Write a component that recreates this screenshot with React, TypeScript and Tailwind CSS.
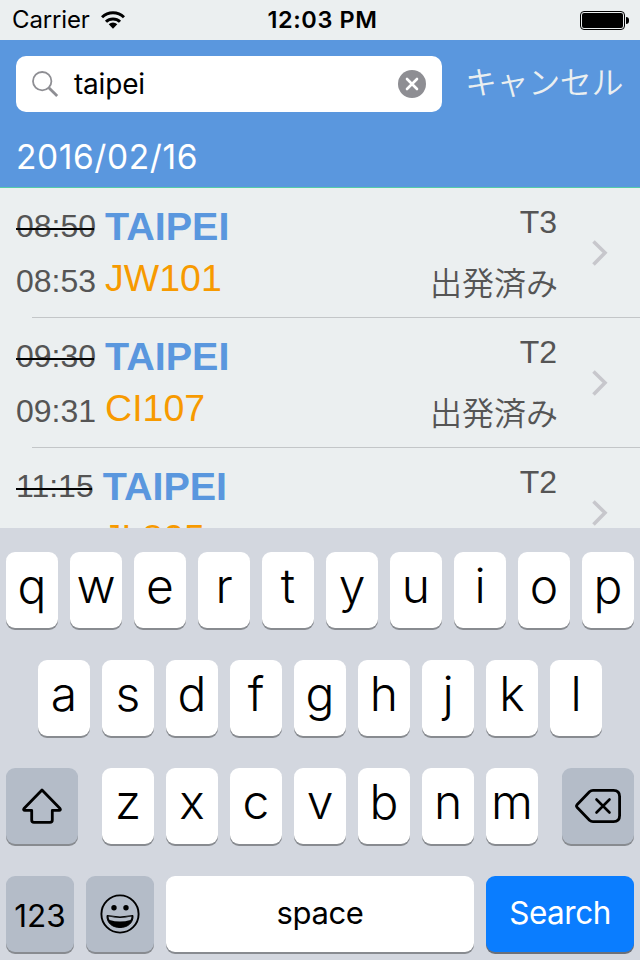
import React from "react";

type Flight = { sched: string; actual: string; code: string; gate: string };

const flights: Flight[] = [
  { sched: "08:50", actual: "08:53", code: "JW101", gate: "T3" },
  { sched: "09:30", actual: "09:31", code: "CI107", gate: "T2" },
  { sched: "11:15", actual: "11:17", code: "JL805", gate: "T2" },
];

function StatusBar() {
  return (
    <div className="flex h-10 shrink-0 items-center justify-between bg-[#ebeff0] pl-3 pr-[11px] text-black">
      <div className="flex w-[200px] items-center">
        <span className="w-[89px] text-[24px] leading-[42px] tracking-[-0.15px] whitespace-nowrap">Carrier</span>
        <svg width="24" height="18" viewBox="0 0 24 18" fill="none" stroke="#000" strokeWidth="3">
          <path d="M1 6.300a15.700 15.700 0 0 1 22 0" />
          <path d="M5 10.800a10 10 0 0 1 14 0" />
          <path d="M12 17.800l-4.300-4.500a6.200 6.200 0 0 1 8.600 0z" fill="#000" stroke="none" />
        </svg>
      </div>
      <span className="ml-[4px] text-[23.5px] leading-[42px] font-semibold tracking-[0.6px]">12:03 PM</span>
      <div className="flex w-[200px] items-center justify-end">
        <div className="h-[19px] w-[45px] rounded-[4px] border border-black p-px">
          <div className="h-full w-full rounded-[2px] bg-black" />
        </div>
        <div className="ml-px h-[7px] w-[3px] rounded-r-full bg-black" />
      </div>
    </div>
  );
}

function Header() {
  return (
    <div className="h-[148px] shrink-0 border-b border-[#55cba8] bg-[#5a97de] pt-4">
      <div className="flex h-14 pl-4">
        <div className="flex h-14 w-[426px] items-center rounded-[10px] bg-white pl-4 pr-4">
          <svg width="27" height="27" viewBox="0 0 27 27" fill="none" stroke="#8e8e93">
            <circle cx="10.2" cy="10.2" r="9.2" strokeWidth="1.8" />
            <path d="M16.8 16.8l8.4 8.2" strokeWidth="2.8" />
          </svg>
          <span className="ml-[15px] flex-1 text-[28px] leading-[54px] tracking-[-0.2px] text-black">taipei</span>
          <svg width="28" height="28" viewBox="0 0 28 28">
            <circle cx="14" cy="14" r="14" fill="#8e8e93" />
            <path d="M9 9l10 10M19 9l-10 10" stroke="#fff" strokeWidth="2.6" strokeLinecap="round" />
          </svg>
        </div>
        <span className="ml-[23px] h-14 font-['Noto_Sans_CJK_JP',sans-serif] text-[32px] leading-[48px] font-[350] tracking-[-0.4px] whitespace-nowrap text-[#ebeff0]">
          キャンセル
        </span>
      </div>
      <div className="pl-4 pt-[25px] text-[33.5px] leading-[40px] tracking-[0.6px] text-white">2016/02/16</div>
    </div>
  );
}

function Row({ f }: { f: Flight }) {
  return (
    <div className="relative flex h-[130px] shrink-0 pl-4 font-['Liberation_Sans','Noto_Sans_CJK_JP',sans-serif] text-[#555]">
      <div className="pt-[18px] text-[32px] leading-[40px]">
        <div className="relative w-fit">
          {f.sched}
          <div className="absolute top-[22px] right-[2px] left-0 h-[2px] bg-black" />
        </div>
        <div className="mt-[15px]">{f.actual}</div>
      </div>
      <div className="ml-[9px] flex-1">
        <div className="mt-[18px] text-[39.5px] leading-[40px] font-bold text-[#5a97de]">TAIPEI</div>
        <div className="mt-3 text-[37.5px] leading-[40px] text-[#f79a00]">{f.code}</div>
      </div>
      <div className="mr-[34px] pt-[14px] text-right text-[32px] leading-[40px]">
        <div className="pr-px">{f.gate}</div>
        <div className="mt-[19px] font-['Noto_Sans_CJK_JP',sans-serif] font-[350]">出発済み</div>
      </div>
      <svg className="mt-[52px] mr-8 shrink-0" width="16" height="26" viewBox="0 0 16 26" fill="none" stroke="#c7c7cc" strokeWidth="3.6">
        <path d="M1.500 1.500L13 12.800L1.500 24.500" />
      </svg>
      <div className="absolute right-0 bottom-0 left-8 h-px bg-[#c3c6c8]" />
    </div>
  );
}

function Key({ k }: { k: string }) {
  return (
    <div className="h-[76px] w-[52px] rounded-[9px] bg-white text-center text-[48px] leading-[67px] font-light text-black shadow-[0_2px_0_#888b90]">
      {k}
    </div>
  );
}

const gray = "flex h-[76px] items-center justify-center rounded-[9px] bg-[#b4bcc8] text-black shadow-[0_2px_0_#888b90]";

function Keyboard() {
  return (
    <div className="relative flex h-[432px] shrink-0 flex-col gap-8 bg-[#d3d7df] px-[6px] pt-6">
      <div className="flex gap-3">
        {"qwertyuiop".split("").map((k) => <Key key={k} k={k} />)}
      </div>
      <div className="flex justify-center gap-3">
        {"asdfghjkl".split("").map((k) => <Key key={k} k={k} />)}
      </div>
      <div className="flex justify-between">
        <div className={gray + " w-[72px]"}>
          <svg width="40" height="36" viewBox="0 0 40 36" fill="none" stroke="#000" strokeWidth="2.8" strokeLinejoin="round">
            <path d="M20 2L38 20.5C38.8 21.6 38.2 22.4 37.2 22.4H30.3V32Q30.3 34.4 28 34.4H12Q9.7 34.4 9.7 32V22.4H2.8C1.8 22.4 1.2 21.6 2 20.5Z" />
          </svg>
        </div>
        <div className="flex gap-3">
          {"zxcvbnm".split("").map((k) => <Key key={k} k={k} />)}
        </div>
        <div className={gray + " w-[72px]"}>
          <svg width="46" height="34" viewBox="0 0 46 34" fill="none" stroke="#000" strokeWidth="2.8" strokeLinejoin="round" strokeLinecap="round">
            <path d="M18 1.4H38.5Q44.6 1.4 44.6 7.5V26.5Q44.6 32.6 38.5 32.6H18Q16 32.6 14.5 31.2L2 18.2Q1 17 2 15.8L14.5 2.8Q16 1.4 18 1.4Z" />
            <path d="M21.5 10.5L34.5 23.5M34.5 10.5L21.5 23.5" strokeWidth="2.6" />
          </svg>
        </div>
      </div>
      <div className="flex gap-3">
        <div className={gray + " w-[68px] pt-1 text-[31.5px]"}>123</div>
        <div className={gray + " w-[68px]"}>
          <svg className="-mt-px" width="40" height="40" viewBox="0 0 40 40">
            <circle cx="20" cy="20" r="18.6" fill="none" stroke="#000" strokeWidth="1.9" />
            <circle cx="14" cy="13.8" r="2.7" />
            <circle cx="26" cy="13.8" r="2.7" />
            <path d="M7 21.5Q20 24.5 33 21.5C33.5 29 27.5 33.5 20 33.5S6.5 29 7 21.5Z" stroke="#000" strokeWidth="1" strokeLinejoin="round" />
            <path d="M8.5 22.600Q20 25.500 31.500 22.600Q31.500 24.500 30.500 26Q20 29 9.500 26Q8.500 24.500 8.500 22.600Z" fill="#b4bcc8" />
          </svg>
        </div>
        <div className="h-[76px] w-[308px] rounded-[9px] bg-white text-center text-[31px] leading-[73px] tracking-[-0.4px] text-black shadow-[0_2px_0_#888b90]">
          space
        </div>
        <div className="h-[76px] w-[148px] rounded-[9px] bg-[#0a7dff] text-center text-[31.5px] leading-[73px] tracking-[-0.5px] text-white shadow-[0_2px_0_#6b7079]">
          Search
        </div>
      </div>
    </div>
  );
}

export default function App() {
  return (
    <div className="flex h-[960px] w-[640px] flex-col overflow-hidden bg-[#ebeff0] font-['Inter','Noto_Sans_CJK_JP',sans-serif]">
      <StatusBar />
      <Header />
      <div className="flex h-[340px] shrink-0 flex-col overflow-hidden">
        {flights.map((f) => <Row key={f.code} f={f} />)}
      </div>
      <Keyboard />
    </div>
  );
}
